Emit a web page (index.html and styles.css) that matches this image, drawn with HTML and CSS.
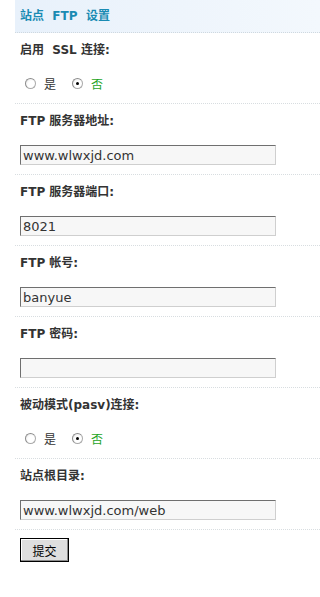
FILE: index.html
```html
<!DOCTYPE html>
<html lang="zh-CN">
<head>
<meta charset="utf-8">
<title>站点 FTP 设置</title>
<link rel="stylesheet" href="styles.css">
</head>
<body>
<form class="panel">
  <div class="head">站点&nbsp; FTP&nbsp; 设置</div>

  <div class="row">
    <div class="label">启用&nbsp; SSL 连接:</div>
    <div class="choices">
      <label class="opt"><input type="radio" name="ssl" class="radio"><span>是</span></label>
      <label class="opt"><input type="radio" name="ssl" class="radio" checked><span class="no">否</span></label>
    </div>
  </div>

  <div class="row">
    <div class="label">FTP 服务器地址:</div>
    <div class="field"><input class="text" type="text" value="www.wlwxjd.com"></div>
  </div>

  <div class="row">
    <div class="label">FTP 服务器端口:</div>
    <div class="field"><input class="text" type="text" value="8021"></div>
  </div>

  <div class="row">
    <div class="label">FTP 帐号:</div>
    <div class="field"><input class="text" type="text" value="banyue"></div>
  </div>

  <div class="row">
    <div class="label">FTP 密码:</div>
    <div class="field"><input class="text" type="password" value=""></div>
  </div>

  <div class="row">
    <div class="label">被动模式(pasv)连接:</div>
    <div class="choices">
      <label class="opt"><input type="radio" name="pasv" class="radio"><span>是</span></label>
      <label class="opt"><input type="radio" name="pasv" class="radio" checked><span class="no">否</span></label>
    </div>
  </div>

  <div class="row">
    <div class="label">站点根目录:</div>
    <div class="field"><input class="text" type="text" value="www.wlwxjd.com/web"></div>
  </div>

  <div class="actions">
    <button type="button" class="btn">提交</button>
  </div>
</form>
</body>
</html>
```

FILE: styles.css
```css
html, body {
  margin: 0;
  padding: 0;
  background: #fff;
}

body {
  font-family: "DejaVu Sans", "Noto Sans CJK SC", sans-serif;
  font-size: 12px;
  color: #333;
}

.panel {
  margin: 0 0 0 15px;
}

.head {
  height: 33px;
  line-height: 32px;
  padding-left: 5px;
  font-weight: bold;
  color: #1a8bb3;
  background: linear-gradient(to right, #e8f1fb, #f3f8fd);
  border-bottom: 1px dotted #cfd8df;
  box-sizing: border-box;
}

.row {
  padding: 0 5px;
  border-bottom: 1px dotted #d8dde0;
}

.label {
  height: 34px;
  line-height: 35px;
  font-weight: bold;
  color: #333;
}

.field {
  padding: 7px 0 9px;
}

.text {
  display: block;
  box-sizing: border-box;
  width: 256px;
  height: 20px;
  margin: 0;
  padding: 0 2px;
  font-family: "DejaVu Sans", sans-serif;
  font-size: 13px;
  color: #333;
  background: #f7f7f7;
  border-style: solid;
  border-width: 1px;
  border-color: #6f6f6f #cfcfcf #cfcfcf #6f6f6f;
  outline: none;
}

.choices {
  height: 33px;
  padding-bottom: 3px;
  display: flex;
  align-items: center;
  gap: 16px;
  padding-left: 5px;
}

.opt {
  display: flex;
  align-items: center;
  gap: 8px;
  font-family: "Noto Sans CJK SC", sans-serif;
  font-size: 12px;
}

.radio {
  appearance: none;
  -webkit-appearance: none;
  margin: 0;
  width: 11px;
  height: 11px;
  border-radius: 50%;
  border: 1px solid #a9a9a9;
  border-top-color: #8c8c8c;
  border-left-color: #8c8c8c;
  background: radial-gradient(circle at 65% 65%, #ffffff 45%, #e4e4e4 100%);
  box-sizing: border-box;
  position: relative;
}

.radio:checked::after {
  content: "";
  position: absolute;
  left: 3px;
  top: 3px;
  width: 3px;
  height: 3px;
  border-radius: 50%;
  background: #000;
}

.no {
  color: #1fa51f;
}

.actions {
  padding: 8px 5px 0;
}

.btn {
  width: 49px;
  height: 24px;
  margin: 0;
  padding: 0;
  font-family: "Noto Sans CJK SC", sans-serif;
  font-size: 12px;
  color: #000;
  background: #dedede;
  border: 1px solid #000;
  box-shadow: inset -1px -1px 0 #8a8a8a, inset 1px 1px 0 #ffffff;
}
```
